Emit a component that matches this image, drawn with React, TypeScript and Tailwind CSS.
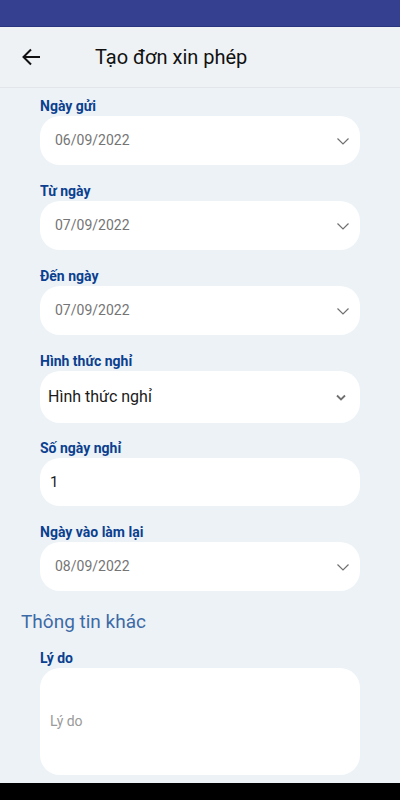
import React from "react";

const font = { fontFamily: "Roboto, 'Noto Sans', sans-serif" };

function Chevron() {
  return (
    <svg width="14" height="10" viewBox="0 0 14 10" fill="none" className="text-[#707070]">
      <path d="M1.5 2.5 L7 8 L12.5 2.5" stroke="currentColor" strokeWidth="1.2" />
    </svg>
  );
}

function SmallChevron() {
  return (
    <svg width="10" height="7" viewBox="0 0 10 7" fill="none" className="text-[#707070]">
      <path d="M1 1.5 L5 5.5 L9 1.5" stroke="currentColor" strokeWidth="1.8" />
    </svg>
  );
}

function Label({ children }: { children: React.ReactNode }) {
  return <div className="text-[14px] leading-[18px] font-bold text-[#0b3f8f] mb-[1px]">{children}</div>;
}

function DateField({ label, value }: { label: string; value: string }) {
  return (
    <div>
      <Label>{label}</Label>
      <div className="h-[49px] bg-white rounded-[20px] flex items-center pl-[15px] pr-[10px]">
        <span className="flex-1 text-[14px] text-[#757575]">{value}</span>
        <Chevron />
      </div>
    </div>
  );
}

export default function App() {
  return (
    <div style={font} className="w-[400px] h-[800px] bg-[#edf2f6] flex flex-col overflow-hidden">
      <div className="h-[27px] bg-[#354190] border-b border-[#2a3580]" />
      <div className="h-[61px] flex items-center border-b border-[#e2e6ea] bg-[#eef2f5]">
        <div className="w-[95px] pl-[22px]">
          <svg width="19" height="18" viewBox="0 0 19 18" fill="none">
            <path d="M18 9 H2 M9 1.5 L1.5 9 L9 16.5" stroke="#111" strokeWidth="2" />
          </svg>
        </div>
        <span className="text-[20px] text-[#111]">Tạo đơn xin phép</span>
      </div>

      <div className="flex-1 flex flex-col px-[40px] pt-[9px] gap-[17px]">
        <DateField label="Ngày gửi" value="06/09/2022" />
        <DateField label="Từ ngày" value="07/09/2022" />
        <DateField label="Đến ngày" value="07/09/2022" />
        <div>
          <Label>Hình thức nghỉ</Label>
          <div className="h-[52px] bg-white rounded-[20px] flex items-center pl-[8px] pr-[14px]">
            <span className="flex-1 text-[16px] text-[#1a1a1a]">Hình thức nghỉ</span>
            <SmallChevron />
          </div>
        </div>
        <div className="-mt-[1px]">
          <Label>Số ngày nghỉ</Label>
          <div className="h-[48px] bg-white rounded-[20px] flex items-center pl-[10px]">
            <span className="text-[15px] text-[#1a1a1a]">1</span>
          </div>
        </div>
        <DateField label="Ngày vào làm lại" value="08/09/2022" />

        <div className="-ml-[19px] text-[19px] leading-[28px] text-[#3d6aa6]">Thông tin khác</div>
        <div className="-mt-[4px]">
          <Label>Lý do</Label>
          <div className="h-[107px] bg-white rounded-[20px] flex items-center pl-[10px]">
            <span className="text-[14px] text-[#9a9a9a]">Lý do</span>
          </div>
        </div>
      </div>
      <div className="h-[17px] bg-black" />
    </div>
  );
}
